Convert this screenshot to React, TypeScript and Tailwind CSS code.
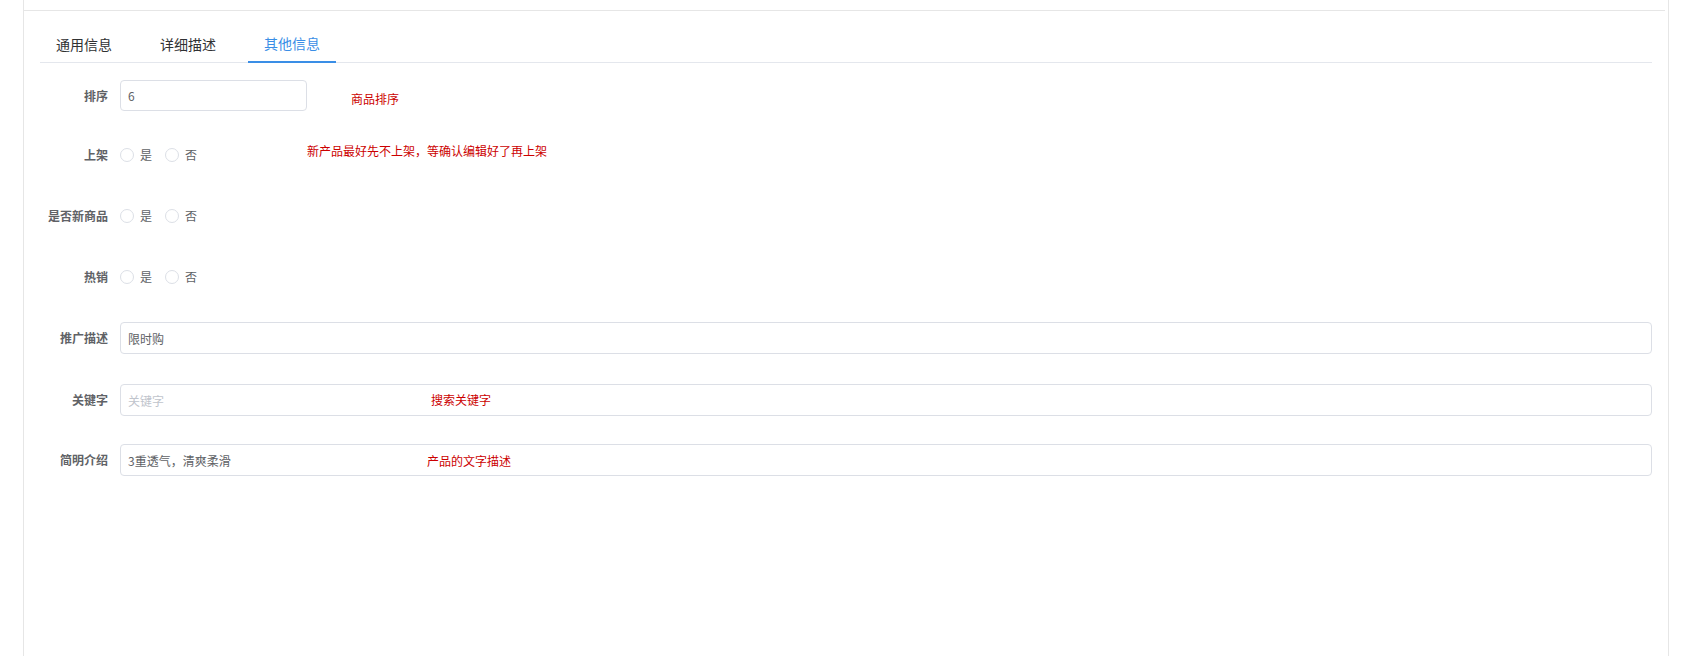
import { useState } from 'react';

const font = { fontFamily: '"Noto Sans CJK SC", "Noto Sans", sans-serif' };

const tabs = ['通用信息', '详细描述', '其他信息'];

const Radio = ({ label }: { label: string }) => (
  <label className="flex items-center">
    <span className="w-[14px] h-[14px] rounded-full border border-[#dcdfe6] bg-white"></span>
    <span className="ml-[6px] text-[12px] text-[#606266]">{label}</span>
  </label>
);

const Label = ({ text }: { text: string }) => (
  <div className="w-[80px] pr-[12px] text-right text-[12px] font-bold text-[#606266] shrink-0">
    {text}
  </div>
);

const RadioRow = ({ text, className }: { text: string; className: string }) => (
  <div className={'flex items-center h-[32px] ' + className}>
    <Label text={text} />
    <div className="flex items-center gap-[13px]">
      <Radio label="是" />
      <Radio label="否" />
    </div>
  </div>
);

const App = () => {
  const [active, setActive] = useState(2);

  return (
    <div className="w-[1686px] h-[656px] bg-white overflow-hidden" style={font}>
      <div className="ml-[23px] w-[1646px] h-[656px] border-l border-r border-[#e6e6e6] flex flex-col">
        <div className="h-[11px] border-b border-[#e6e6e6] mr-[3px]"></div>
        <div className="pl-4 pr-[16px]">
          <div className="mt-[14px] flex border-b border-[#e4e7ed] h-[38px]">
            {tabs.map((t, i) => (
              <div
                key={t}
                onClick={() => setActive(i)}
                className={
                  'px-4 mr-4 h-[38px] flex items-center text-[14px] cursor-pointer ' +
                  (i === active
                    ? 'text-[#3a8ee6] border-b-2 border-[#3a8ee6] -mb-px'
                    : 'text-[#303133]')
                }
              >
                {t}
              </div>
            ))}
          </div>

          <div className="flex flex-col">
            <div className="flex items-center h-[31px] mt-[17px]">
              <Label text="排序" />
              <input
                defaultValue="6"
                className="w-[187px] h-[31px] border border-[#dcdfe6] rounded-[4px] pl-[7px] text-[12px] text-[#606266] outline-none"
              />
              <span className="ml-[44px] mt-[7px] text-[12px] text-[#cc0000]">商品排序</span>
            </div>

            <div className="flex items-center h-[32px] mt-[28px]">
              <Label text="上架" />
              <div className="flex items-center gap-[13px]">
                <Radio label="是" />
                <Radio label="否" />
              </div>
              <span className="ml-[110px] -mt-[9px] text-[12px] text-[#cc0000]">
                新产品最好先不上架，等确认编辑好了再上架
              </span>
            </div>

            <RadioRow text="是否新商品" className="mt-[29px]" />
            <RadioRow text="热销" className="mt-[29px]" />

            <div className="flex items-center h-[32px] mt-[29px]">
              <Label text="推广描述" />
              <input
                defaultValue="限时购"
                className="flex-1 h-[32px] border border-[#dcdfe6] rounded-[4px] pl-[7px] text-[12px] text-[#606266] outline-none"
              />
            </div>

            <div className="flex items-center h-[32px] mt-[30px]">
              <Label text="关键字" />
              <div className="flex-1 relative">
                <input
                  placeholder="关键字"
                  className="w-full h-[32px] border border-[#dcdfe6] rounded-[4px] pl-[7px] text-[12px] text-[#606266] placeholder:text-[#c0c4cc] outline-none"
                />
                <span className="absolute left-[311px] top-[7px] text-[12px] text-[#cc0000]">搜索关键字</span>
              </div>
            </div>

            <div className="flex items-center h-[32px] mt-[28px]">
              <Label text="简明介绍" />
              <div className="flex-1 relative">
                <input
                  defaultValue="3重透气，清爽柔滑"
                  className="w-full h-[32px] border border-[#dcdfe6] rounded-[4px] pl-[7px] text-[12px] text-[#606266] outline-none"
                />
                <span className="absolute left-[307px] top-[8px] text-[12px] text-[#cc0000]">产品的文字描述</span>
              </div>
            </div>
          </div>
        </div>
      </div>
    </div>
  );
};

export default App;
